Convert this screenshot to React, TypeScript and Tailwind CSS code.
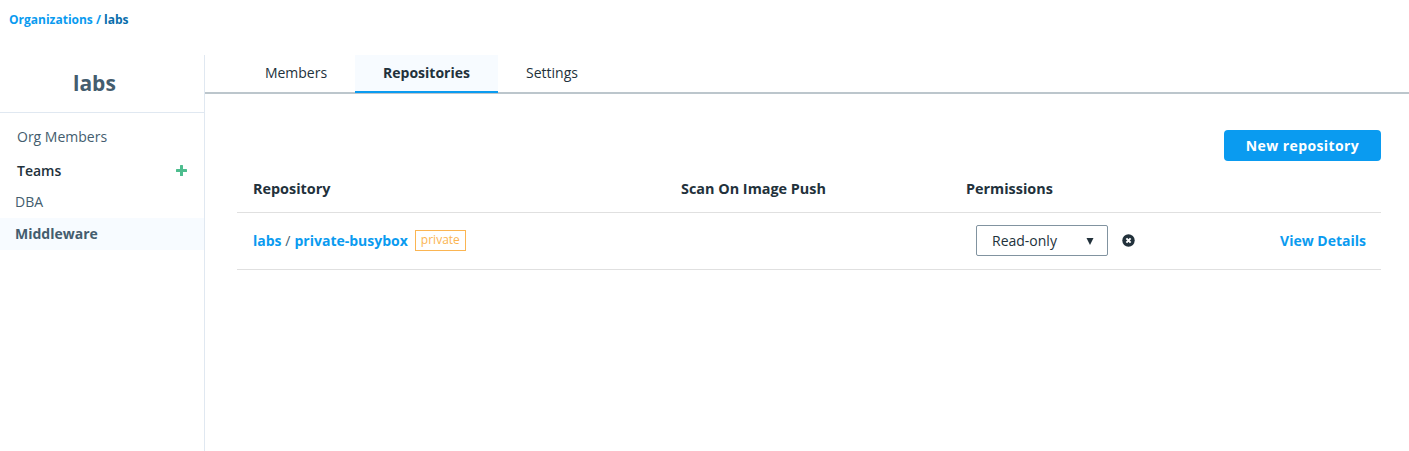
const nav = "flex items-center text-[14px]";

function CircleX() {
  return (
    <svg className="h-[13px] w-[13px]" viewBox="0 0 13 13">
      <circle cx="6.5" cy="6.5" r="6.2" fill="#22313b" />
      <path d="M4.4 4.4 8.6 8.6M8.6 4.4 4.4 8.6" stroke="#fff" strokeWidth="2" />
    </svg>
  );
}

function Sidebar() {
  return (
    <aside className="w-[205px] shrink-0 border-r border-[#e0e8f1] text-[#445d6e]">
      <h1 className="flex h-[58px] items-center border-b border-[#e0e8f1] pt-[1px] pl-[73px] text-[21px] font-bold">labs</h1>
      <nav className="pt-[7px]">
        <a className={`${nav} h-[32px] pl-[17px]`}>Org Members</a>
        <div className={`${nav} h-[36px] justify-between pl-[17px] pr-[17px] font-semibold text-[#22313b]`}>
          Teams
          <svg className="h-[11px] w-[11px]" viewBox="0 0 11 11">
            <rect x="4" width="3" height="11" rx=".5" fill="#4dbd8e" />
            <rect y="4" width="11" height="3" rx=".5" fill="#4dbd8e" />
          </svg>
        </div>
        <a className={`${nav} h-[30px] pb-[3px] pl-[15px]`}>DBA</a>
        <a className={`${nav} h-[32px] bg-[#f7fbff] pb-[2px] pl-[15px] font-bold`}>Middleware</a>
      </nav>
    </aside>
  );
}

export default function App() {
  return (
    <div className="flex h-[451px] flex-col overflow-hidden bg-white font-['Open_Sans',sans-serif] text-[14px] text-[#22313b]">
      <header className="h-[55px] shrink-0 pl-[9px] pt-[11px] text-[12px] leading-[18px] font-bold text-[#0a9bf0]">
        Organizations / <span className="text-[#086dab]">labs</span>
      </header>
      <div className="flex flex-1">
        <Sidebar />
        <main className="min-w-0 flex-1">
          <div className="flex h-[39px] border-b-2 border-[#bcc6cc] pl-[32px]">
            <a className="h-[38px] w-[118px] pt-[7px] text-center">Members</a>
            <a className="h-[38px] w-[143px] border-b-2 border-[#0a9bf0] bg-[#f7fbff] pt-[7px] text-center font-bold">Repositories</a>
            <a className="h-[38px] w-[108px] pt-[7px] text-center">Settings</a>
          </div>
          <section className="pl-[32px] pr-[28px] pt-[36px]">
            <div className="flex justify-end">
              <button className="h-[31px] w-[157px] rounded-[4px] bg-[#0a9bf0] font-bold tracking-[0.4px] text-white">New repository</button>
            </div>
            <div className="flex h-[52px] items-center border-b border-[#e0e0e0] pl-[16px] pt-[4px] text-[14.4px] font-bold">
              <div className="w-[428px]">Repository</div>
              <div className="w-[285px]">Scan On Image Push</div>
              <div>Permissions</div>
            </div>
            <div className="flex h-[57px] items-center border-b border-[#e0e0e0] pb-[1px] pl-[16px] pr-[15px]">
              <div className="flex w-[723px] items-center">
                <div className="whitespace-pre"><b className="text-[#0a9bf0]">labs</b><span className="mr-[0.5px] text-[#445d6e]"> / </span><b className="text-[#0a9bf0]">private-busybox</b></div>
                <span className="ml-[7px] h-[21px] w-[51px] border border-[#fbb552] text-center text-[12px] leading-[18px] text-[#fbb552]">private</span>
              </div>
              <div className="flex h-[31px] w-[132px] items-center justify-between rounded-[2px] border border-[#8193a0] pl-[15px] pr-[13px]">
                Read-only
                <svg className="mt-[1px] h-[7px] w-[8px]" viewBox="0 0 8 7"><path d="M.5 0h7L4 7z" fill="#22313b" /></svg>
              </div>
              <div className="ml-[14px]"><CircleX /></div>
              <a className="ml-auto font-bold text-[#0a9bf0]">View Details</a>
            </div>
          </section>
        </main>
      </div>
    </div>
  );
}
